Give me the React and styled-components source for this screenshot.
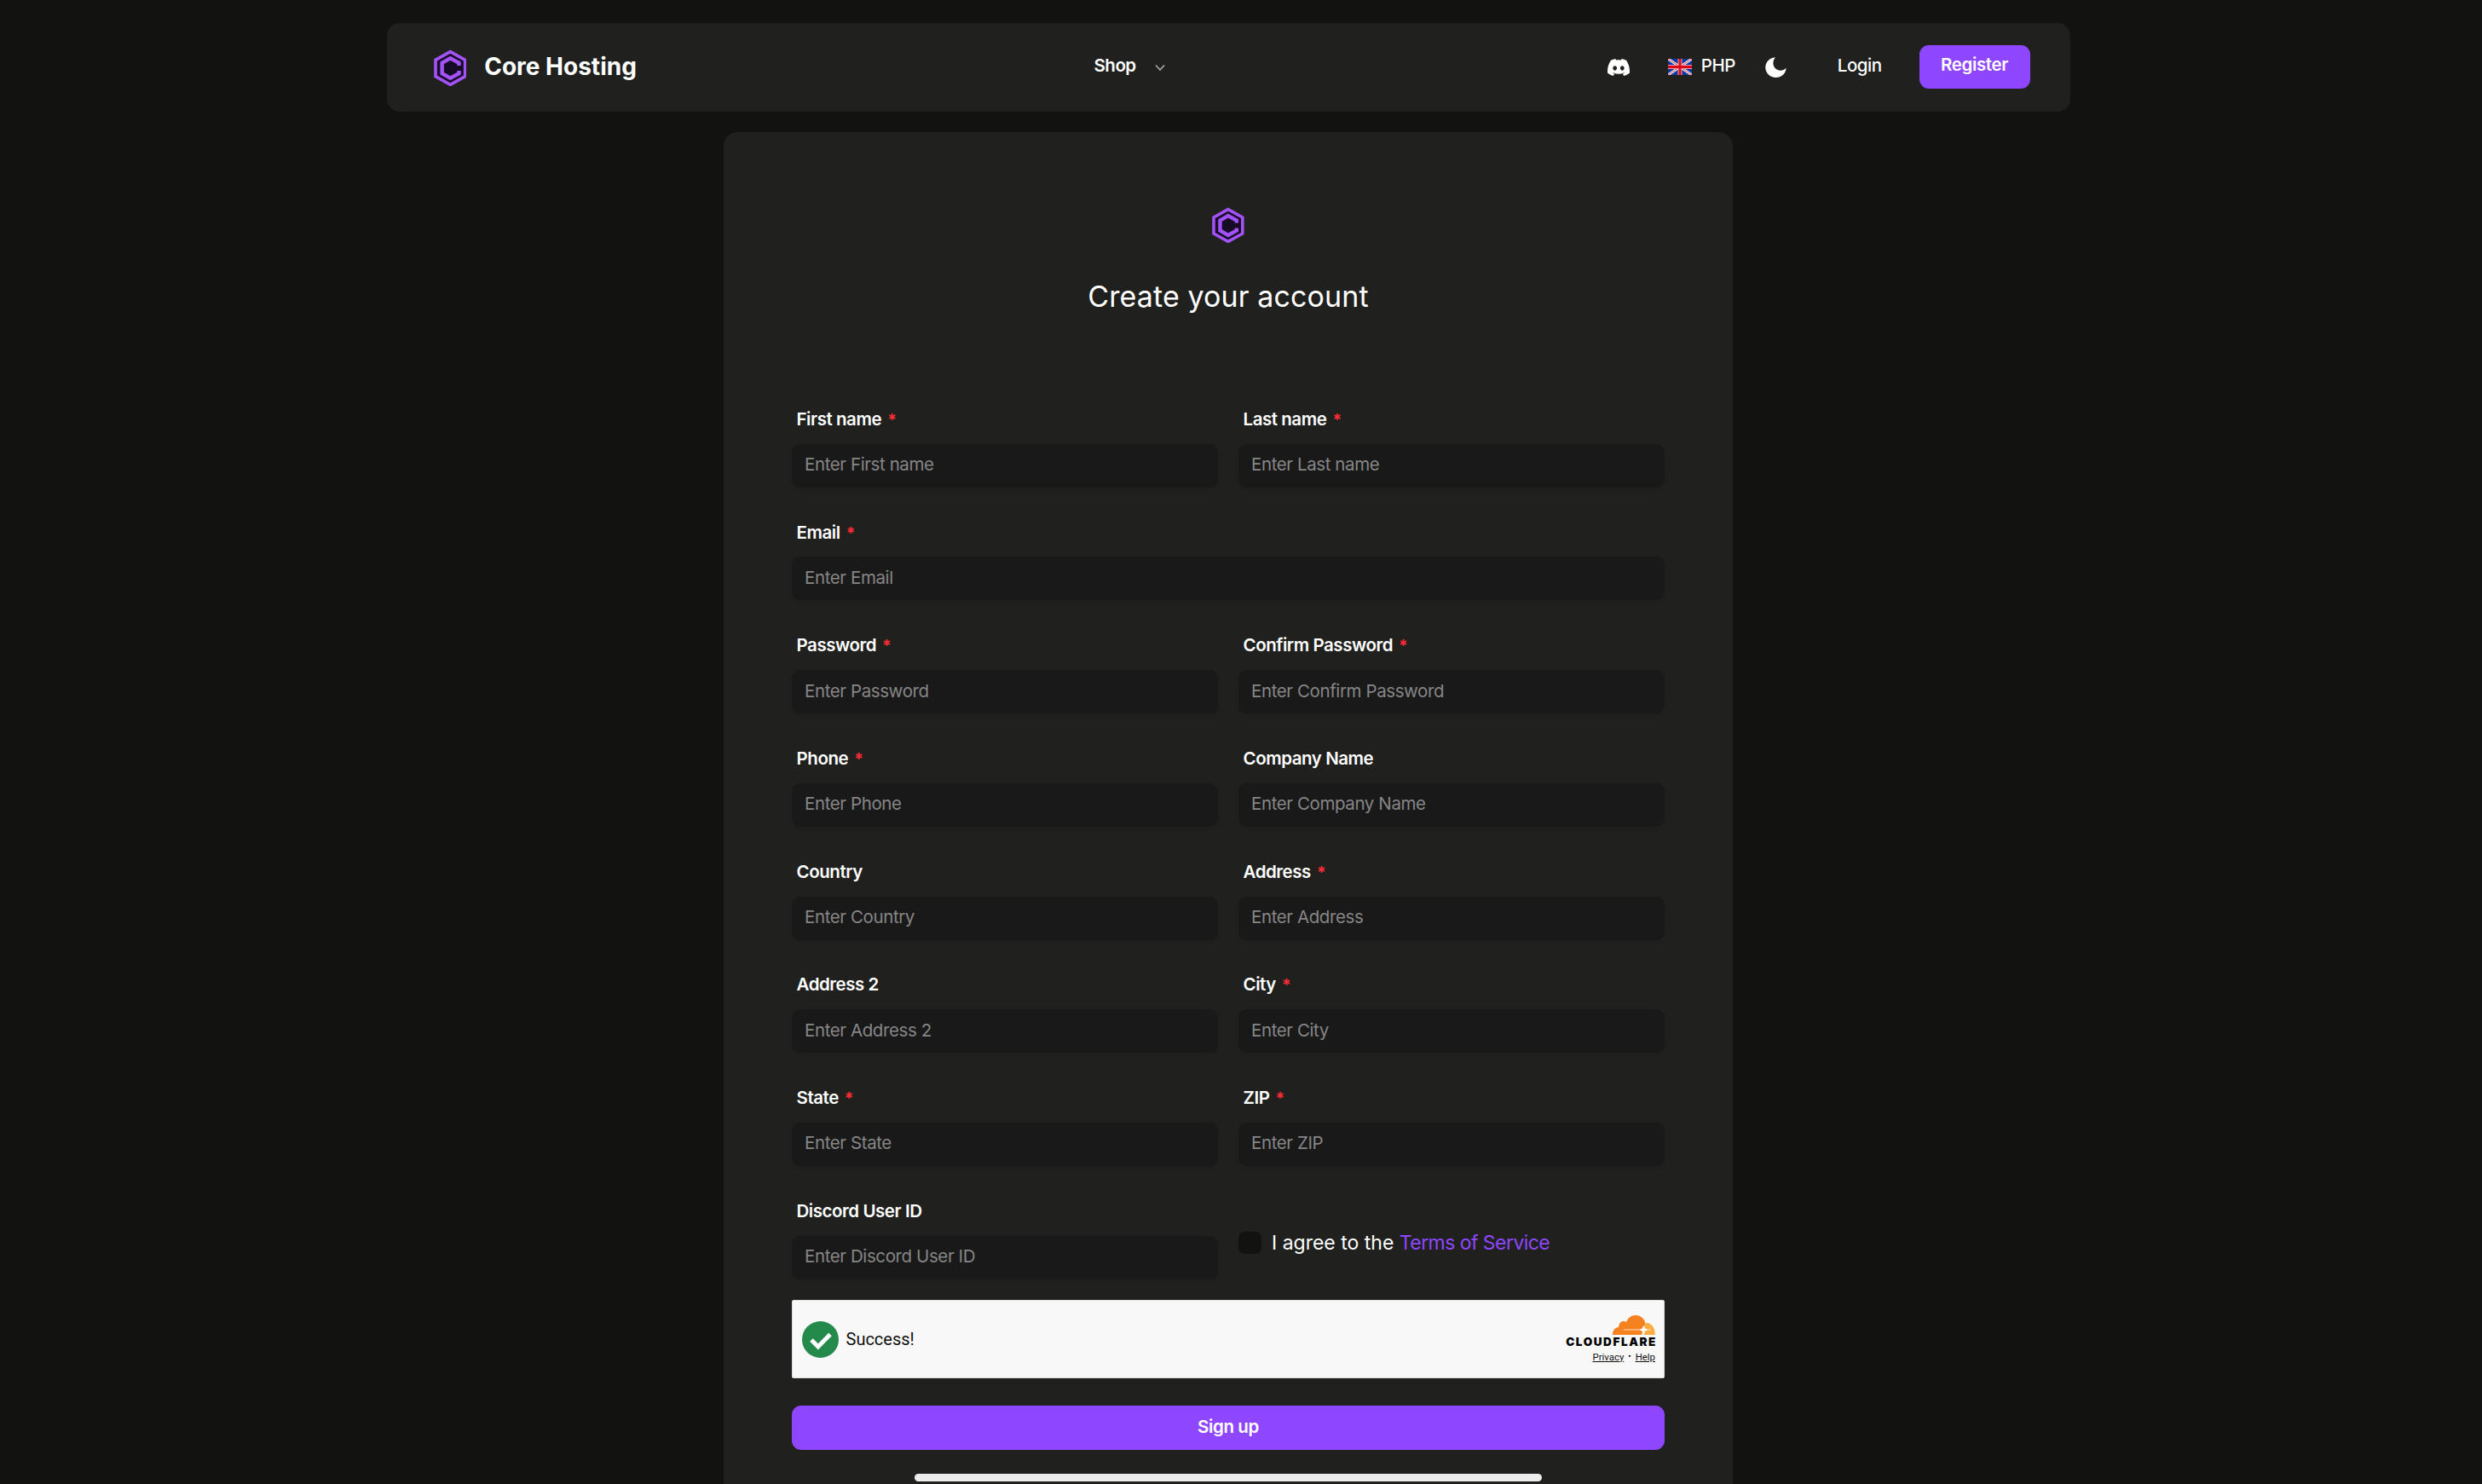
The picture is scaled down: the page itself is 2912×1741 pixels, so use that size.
import React from "react";
import styled, { createGlobalStyle } from "styled-components";

const GlobalStyle = createGlobalStyle`
  * {
    box-sizing: border-box;
  }

  html, body {
    margin: 0;
    background: #121210;
    overflow: hidden;
  }

  body {
    font-family: "Inter", "Liberation Sans", sans-serif;
    color: #fff;
  }
`;

const fields = [
  { label: "First name", required: true },
  { label: "Last name", required: true },
  { label: "Email", required: true, wide: true },
  { label: "Password", required: true },
  { label: "Confirm Password", required: true },
  { label: "Phone", required: true },
  { label: "Company Name" },
  { label: "Country" },
  { label: "Address", required: true },
  { label: "Address 2" },
  { label: "City", required: true },
  { label: "State", required: true },
  { label: "ZIP", required: true },
  { label: "Discord User ID" },
];

const Page = styled.div`
  width: 2882px;
  height: 1741px;
  overflow: hidden;
  padding-top: 27px;
  display: flex;
  flex-direction: column;
  align-items: center;
  gap: 24px;
  position: relative;
`;

const Navbar = styled.nav`
  width: 1975px;
  height: 104px;
  flex-shrink: 0;
  padding: 0 47px 0 55px;
  display: grid;
  grid-template-columns: 775px auto 1fr;
  align-items: center;
  background: #20201e;
  border-radius: 15px;
`;

const Brand = styled.div`
  display: flex;
  align-items: center;
  gap: 21px;
  font-size: 28px;
  font-weight: 650;
  line-height: 36px;
`;

const BrandName = styled.span`
  padding-bottom: 3px;
`;

const Shop = styled.button`
  display: flex;
  align-items: center;
  gap: 22px;
  padding: 0;
  border: 0;
  background: none;
  color: #fff;
  font: 600 20.5px/28px "Inter", sans-serif;
`;

const NavText = styled.span`
  padding-bottom: 4px;
  font-size: 20.5px;
  font-weight: ${(props) => props.$weight || 500};
  letter-spacing: -0.5px;
`;

const NavRight = styled.div`
  display: flex;
  align-items: center;
  justify-content: flex-end;
  padding-bottom: 1px;
`;

const Currency = styled.div`
  display: flex;
  align-items: center;
  gap: 11px;
  margin: 0 35px 0 45px;
`;

const Login = styled.a`
  display: flex;
  margin: 0 44px 0 60px;
`;

const Button = styled.button`
  width: 100%;
  height: 52px;
  padding: 0 0 3px;
  border: 0;
  border-radius: 11px;
  background: #8e47ff;
  color: #fff;
  font: 600 20.5px/28px "Inter", sans-serif;
  letter-spacing: -0.4px;
`;

const RegisterButton = styled(Button)`
  width: 130px;
  height: 51px;
  padding-bottom: 6px;
`;

const Card = styled.main`
  width: 1184px;
  height: 1640px;
  flex-shrink: 0;
  padding: 88px 80px 0;
  background: #20201e;
  border-radius: 16px;
  display: flex;
  flex-direction: column;
  align-items: center;
`;

const Title = styled.h1`
  margin: 41px 0 113px;
  font-size: 34px;
  font-weight: 400;
  line-height: 44px;
  letter-spacing: 0.1px;
`;

const Form = styled.form`
  width: 100%;
  display: grid;
  grid-template-columns: 500px 500px;
  column-gap: 24px;
  row-gap: 43.9px;
`;

const Field = styled.div`
  grid-column: ${(props) => (props.$wide ? "1 / -1" : "auto")};
`;

const Label = styled.label`
  display: block;
  height: 37.8px;
  padding-left: 5.5px;
  font-size: 20.5px;
  font-weight: 620;
  line-height: 18px;
  letter-spacing: -0.45px;
`;

const Required = styled.span`
  margin-left: 7px;
  color: #ff2c35;
  font-size: 19px;
  font-weight: 700;
`;

const Input = styled.input`
  display: block;
  width: 100%;
  height: 51px;
  padding: 0 15px 3px;
  border: 0;
  border-radius: 10px;
  background: #191919;
  box-shadow: 0 2px 4px rgba(0, 0, 0, 0.08);
  color: #fff;
  font: 400 20.5px/28px "Inter", sans-serif;
  letter-spacing: -0.4px;

  &::placeholder {
    color: #868686;
    opacity: 1;
  }
`;

const Terms = styled.div`
  display: flex;
  align-items: center;
  gap: 12px;
  height: 26px;
  margin-top: 33px;
  font-size: 23px;
  white-space: nowrap;
`;

const Checkbox = styled.span`
  width: 27px;
  height: 26px;
  border-radius: 7px;
  background: #121210;
`;

const TermsLink = styled.a`
  color: #8e47ff;
  letter-spacing: -0.55px;
`;

const Captcha = styled.div`
  width: 1024px;
  height: 92px;
  margin: 24.4px 0 32px;
  padding: 0 10px 0 11px;
  display: flex;
  align-items: center;
  justify-content: space-between;
  background: #f8f8f8;
  border: 1px solid #dcdfdc;
  border-radius: 2px;
  color: #111;
  font-family: "Roboto", sans-serif;
`;

const Status = styled.div`
  display: flex;
  align-items: center;
  gap: 8.5px;
  font-size: 20px;
`;

const Cloudflare = styled.div`
  display: flex;
  flex-direction: column;
  align-items: flex-end;
`;

const CloudflareName = styled.div`
  margin-right: -2px;
  font: 900 13.5px/16px "Inter", sans-serif;
  letter-spacing: 1.6px;
  color: #000;
`;

const CaptchaLinks = styled.div`
  display: flex;
  gap: 5px;
  margin-top: 2px;
  font-size: 11.4px;
  line-height: 16px;
`;

const CaptchaLink = styled.a`
  text-decoration: underline;
`;

const Bullet = styled.span`
  font-size: 10px;
`;

const HomeBar = styled.div`
  position: absolute;
  left: 1073px;
  top: 1729px;
  width: 736px;
  height: 9px;
  border-radius: 5px;
  background: #ededed;
`;

const Logo = ({ size }) => (
  <svg width={size * 0.9} height={size} viewBox="0 0 38 42">
    <path d="M19 2.5 36 12v19L19 40.5 2 31V12Z" fill="#170c26" stroke="#a252f5" strokeWidth="3.6" />
    <path d="M29 18.5V15.5L19 10 9.5 15.5v12L19 33l10-5.5V24.500" fill="none" stroke="#a252f5" strokeWidth="4.4" />
  </svg>
);

const Chevron = () => (
  <svg width="12" height="9" viewBox="0 0 12 9">
    <path d="m1 1.500 5 5.500 5-5.500" fill="none" stroke="#a3a3a1" strokeWidth="1.800" />
  </svg>
);

const Discord = () => (
  <svg width="26" height="20" viewBox="0 0 127.140 96.360" preserveAspectRatio="none">
    <path
      fill="#fff"
      d="M107.700 8.070A105.150 105.150 0 0 0 81.470 0a72.060 72.060 0 0 0-3.360 6.830 97.680 97.680 0 0 0-29.110 0A72.370 72.370 0 0 0 45.640 0a105.890 105.890 0 0 0-26.250 8.090C2.790 32.650-1.710 56.600.540 80.210a105.730 105.730 0 0 0 32.170 16.150 77.700 77.700 0 0 0 6.890-11.110 68.420 68.420 0 0 1-10.850-5.180c.910-.660 1.800-1.340 2.660-2a75.570 75.570 0 0 0 64.320 0c.870.710 1.760 1.390 2.660 2a68.680 68.680 0 0 1-10.870 5.190 77 77 0 0 0 6.890 11.100 105.250 105.250 0 0 0 32.190-16.140c2.640-27.380-4.510-51.110-18.900-72.150ZM42.450 65.690C36.180 65.690 31 60 31 53s5-12.740 11.430-12.740S54 46 53.890 53s-5.050 12.690-11.440 12.690Zm42.240 0C78.410 65.690 73.250 60 73.250 53s5-12.740 11.440-12.740S96.230 46 96.120 53s-5.040 12.690-11.430 12.690Z"
    />
  </svg>
);

const Flag = () => (
  <svg width="28" height="19" viewBox="0 0 28 19">
    <path fill="#0b37a0" d="M0 0h28v19H0z" />
    <path d="M0 0l28 19M28 0 0 19" stroke="#f4f1f7" strokeWidth="3" />
    <path d="M0 0l28 19M28 0 0 19" stroke="#d8434f" strokeWidth="1" />
    <path d="M14 0v19M0 9.500h28" stroke="#ee9aa3" strokeWidth="5" />
    <path d="M14 0v19M0 9.500h28" stroke="#d80b1c" strokeWidth="2.800" />
  </svg>
);

const Moon = () => (
  <svg width="25" height="24" viewBox="0 0 25 24">
    <path fill="#fff" d="M12 .300C4.500 1 .300 6.500.300 12c0 6.800 5.500 12 12.200 12 6.300 0 11.500-4.300 12.200-11.300C20.500 17 14.500 16.300 11.500 12.800 8.600 9.500 8.700 4 12 .300Z" />
  </svg>
);

const Check = () => (
  <svg width="43" height="43" viewBox="0 0 43 43">
    <circle cx="21.500" cy="21.500" r="21.500" fill="#238a4b" />
    <path d="m11 22 7.800 8L33 15.500" fill="none" stroke="#fff" strokeWidth="5" />
  </svg>
);

const Cloud = () => (
  <svg width="50" height="23" viewBox="0 0 50 23">
    <path fill="#f6821f" d="M0 23c0-5 2.500-8.500 7-9 .500-6 5-8.500 9-6C18 3 22 0 27 0c6 0 11 4.500 11.500 10L34 23Z" />
    <path fill="#fbad41" d="M36 23c0-5 2-10 3-14 6-.500 11 5 10.700 14Z" />
    <path d="M13 17h22M38 17h7" stroke="#fde0c4" strokeWidth="1.200" />
    <path fill="#fff" d="m36.500 12 1.500 3.500 3.500 1.500-3.500 1.700-1.500 4.300-2-4.300-3-1.700 3-1.500Z" />
  </svg>
);

const App = () => {
  return (
    <>
      <GlobalStyle />
      <Page>
        <Navbar>
          <Brand>
            <Logo size={43} />
            <BrandName>Core Hosting</BrandName>
          </Brand>
          <Shop>
            <NavText $weight={600}>Shop</NavText>
            <Chevron />
          </Shop>
          <NavRight>
            <Discord />
            <Currency>
              <Flag />
              <NavText>PHP</NavText>
            </Currency>
            <Moon />
            <Login>
              <NavText>Login</NavText>
            </Login>
            <RegisterButton>Register</RegisterButton>
          </NavRight>
        </Navbar>
        <Card>
          <Logo size={42} />
          <Title>Create your account</Title>
          <Form>
            {fields.map((field) => (
              <Field key={field.label} $wide={field.wide}>
                <Label>
                  {field.label}
                  {field.required && <Required>*</Required>}
                </Label>
                <Input placeholder={`Enter ${field.label}`} />
              </Field>
            ))}
            <Terms>
              <Checkbox />
              <span>
                I agree to the <TermsLink>Terms of Service</TermsLink>
              </span>
            </Terms>
          </Form>
          <Captcha>
            <Status>
              <Check />
              Success!
            </Status>
            <Cloudflare>
              <Cloud />
              <CloudflareName>CLOUDFLARE</CloudflareName>
              <CaptchaLinks>
                <CaptchaLink>Privacy</CaptchaLink>
                <Bullet>•</Bullet>
                <CaptchaLink>Help</CaptchaLink>
              </CaptchaLinks>
            </Cloudflare>
          </Captcha>
          <Button>Sign up</Button>
        </Card>
        <HomeBar />
      </Page>
    </>
  );
};

export default App;
